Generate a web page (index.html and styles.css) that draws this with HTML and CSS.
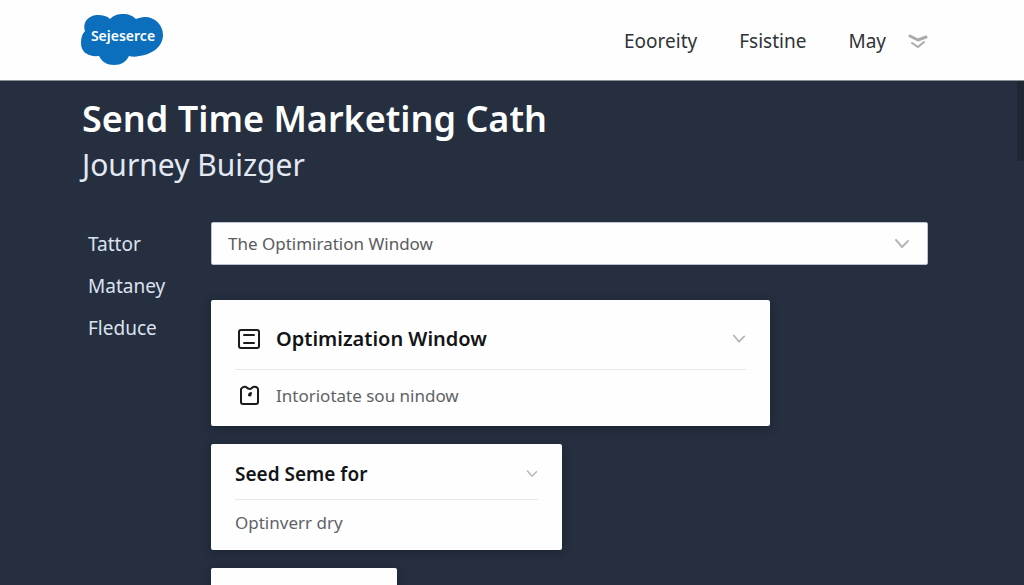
FILE: index.html
```html
<!DOCTYPE html>
<html lang="en">
<head>
  <meta charset="UTF-8" />
  <meta name="viewport" content="width=device-width, initial-scale=1.0"/>
  <title>Send Time Marketing Cath</title>
  <link rel="stylesheet" href="styles.css">
</head>
<body>
  <header class="topbar">
    <a class="logo" href="#">
      <svg viewBox="0 0 82 52" role="img" aria-label="Sejeserce">
        <path fill="#0b6fbe" d="M4 17C1 7 9 1 17 1c5 0 9 1 12 4C33 1 37 0 42 0c6 0 10 2 13 5 3-1 5-2 9-2 10 0 18 8 18 18 0 12-12 20-24 21-3 1-7 1-10 0-3 6-8 9-15 9-7 0-12-3-15-9C8 43 0 39 0 29c0-5 1-9 4-12z"/>
        <text class="logo-text" x="42" y="27" text-anchor="middle">Sejeserce</text>
      </svg>
    </a>
    <nav>
      <a href="#">Eooreity</a>
      <a href="#">Fsistine</a>
      <a href="#">May</a>
      <button type="button" class="nav-more" aria-label="More">
        <svg width="20" height="16" viewBox="0 0 20 16" fill="none" stroke="#a9abad" stroke-linecap="round" stroke-linejoin="round">
          <path stroke-width="3" d="M2 3l8 4 8-3"/>
          <path stroke-width="2" d="M4 10l6 4 6-5"/>
        </svg>
      </button>
    </nav>
  </header>

  <main>
    <h1>Send Time Marketing Cath</h1>
    <p class="subtitle">Journey Buizger</p>

    <div class="layout">
      <aside class="sidebar">
        <a href="#">Tattor</a>
        <a href="#">Mataney</a>
        <a href="#">Fleduce</a>
      </aside>

      <div class="content">
        <div class="select-box">
          <select aria-label="Window">
            <option>The Optimiration Window</option>
          </select>
          <svg class="chevron" width="16" height="10" viewBox="0 0 16 10"><path d="M2 1l6 7 6-6"/></svg>
        </div>

        <section class="card card-large">
          <div class="card-head">
            <svg class="icon" width="26" height="24" viewBox="0 0 26 24">
              <rect x="4" y="3" width="20" height="18" rx="2"/>
              <path d="M9 8h10M9 16h10"/>
            </svg>
            <h2>Optimization Window</h2>
            <button type="button" aria-label="Expand Optimization Window">
              <svg class="chevron" width="14" height="10" viewBox="0 0 16 10"><path d="M2 1l6 7 6-6"/></svg>
            </button>
          </div>
          <div class="card-row">
            <svg class="icon" width="26" height="24" viewBox="0 0 26 24">
              <path d="M6 6q2-3 5-2 2 2 4 2 1 0 3-2 4-1 5 2v13q0 2-2 2H8q-2 0-2-2z"/>
              <path stroke-width="3" d="M15 11v1"/>
              <path d="M14 12l2-2"/>
            </svg>
            <span>Intoriotate sou nindow</span>
          </div>
        </section>

        <section class="card card-medium">
          <div class="card-head">
            <h2>Seed Seme for</h2>
            <button type="button" aria-label="Expand Seed Seme for">
              <svg class="chevron" width="12" height="8" viewBox="0 0 16 10"><path d="M2 1l6 7 6-6"/></svg>
            </button>
          </div>
          <div class="card-row">
            <span>Optinverr dry</span>
          </div>
        </section>

        <section class="card card-small"></section>
      </div>
    </div>
  </main>
</body>
</html>
```
FILE: styles.css
```css
* {
  box-sizing: border-box;
}

body {
  font-family: 'Noto Sans', sans-serif;
  font-size: 18px;
  background: #252f3f;
  margin: 0;
}

a {
  text-decoration: none;
}

button {
  display: flex;
  padding: 0;
  background: none;
  border: none;
  cursor: pointer;
}

.topbar {
  display: flex;
  align-items: center;
  justify-content: space-between;
  height: 81px;
  padding: 0 96px 0 81px;
  background: #fefefe;
  border-bottom: 1px solid #8b9096;
}

.logo svg {
  display: block;
  width: 82px;
  height: 52px;
}

.logo-text {
  fill: #ffffff;
  font-size: 14px;
  font-weight: 600;
}

nav {
  display: flex;
  align-items: center;
  gap: 42px;
}

nav a {
  color: #2f3337;
  font-size: 19px;
  line-height: 28px;
  padding-top: 2px;
}

.nav-more {
  margin-left: -20px;
  padding-top: 2px;
}

main {
  position: relative;
  padding: 16px 96px 0 82px;
}

/* scroll thumb on the right edge */
main::after {
  content: "";
  position: absolute;
  top: 0;
  right: 0;
  width: 7px;
  height: 80px;
  background: #1e2835;
}

h1 {
  margin: 0;
  color: #ffffff;
  font-size: 36px;
  font-weight: 600;
  line-height: 44px;
}

.subtitle {
  margin: 4px 0 0;
  color: #e3e8f3;
  font-size: 30px;
  line-height: 40px;
}

.layout {
  display: flex;
  margin-top: 37px;
}

.sidebar {
  display: flex;
  flex-direction: column;
  flex: 0 0 129px;
  gap: 18px;
  padding: 10px 0 0 6px;
}

.sidebar a {
  color: #dde2ee;
  font-size: 19px;
  line-height: 24px;
}

.content {
  flex: 1;
}

.select-box {
  display: grid;
  align-items: center;
  margin-bottom: 35px;
}

.select-box select,
.select-box .chevron {
  grid-area: 1 / 1;
}

.select-box select {
  appearance: none;
  width: 100%;
  height: 43px;
  padding: 0 16px;
  background: #fefefe;
  border: 1px solid #b9c3d2;
  border-radius: 2px;
  color: #5a5c60;
  font-family: inherit;
  font-size: 17px;
}

.select-box .chevron {
  justify-self: end;
  margin-right: 18px;
  pointer-events: none;
}

.chevron {
  fill: none;
  stroke: #b4b6b9;
  stroke-width: 2;
  stroke-linecap: round;
}

.icon {
  fill: none;
  stroke: #1a1b1d;
  stroke-width: 2;
  stroke-linecap: round;
  stroke-linejoin: round;
}

.card {
  margin-bottom: 18px;
  padding: 0 24px;
  background: #fefefe;
  border-radius: 2px;
  box-shadow: 0 2px 10px rgba(10, 18, 30, 0.4);
}

.card-head,
.card-row {
  display: flex;
  align-items: center;
  gap: 15px;
}

.card-head {
  border-bottom: 1px solid #e6e7e9;
}

.card-head button {
  margin-left: auto;
}

h2 {
  margin: 0;
  color: #131416;
  font-size: 20px;
  font-weight: 600;
}

.card-row {
  padding-bottom: 6px;
  color: #606266;
  font-size: 17px;
}

.card-large {
  width: 78%;
}

.card-large .card-head {
  height: 70px;
  padding-top: 8px;
}

.card-large .card-row {
  height: 56px;
}

.card-medium {
  width: 49%;
}

.card-medium .card-head {
  height: 56px;
  padding-top: 4px;
}

.card-medium .card-row {
  height: 50px;
}

.card-small {
  width: 26%;
  height: 17px;
  margin-bottom: 0;
  border-radius: 2px 2px 0 0;
}

.card-medium h2 {
  font-size: 19px;
}
```
